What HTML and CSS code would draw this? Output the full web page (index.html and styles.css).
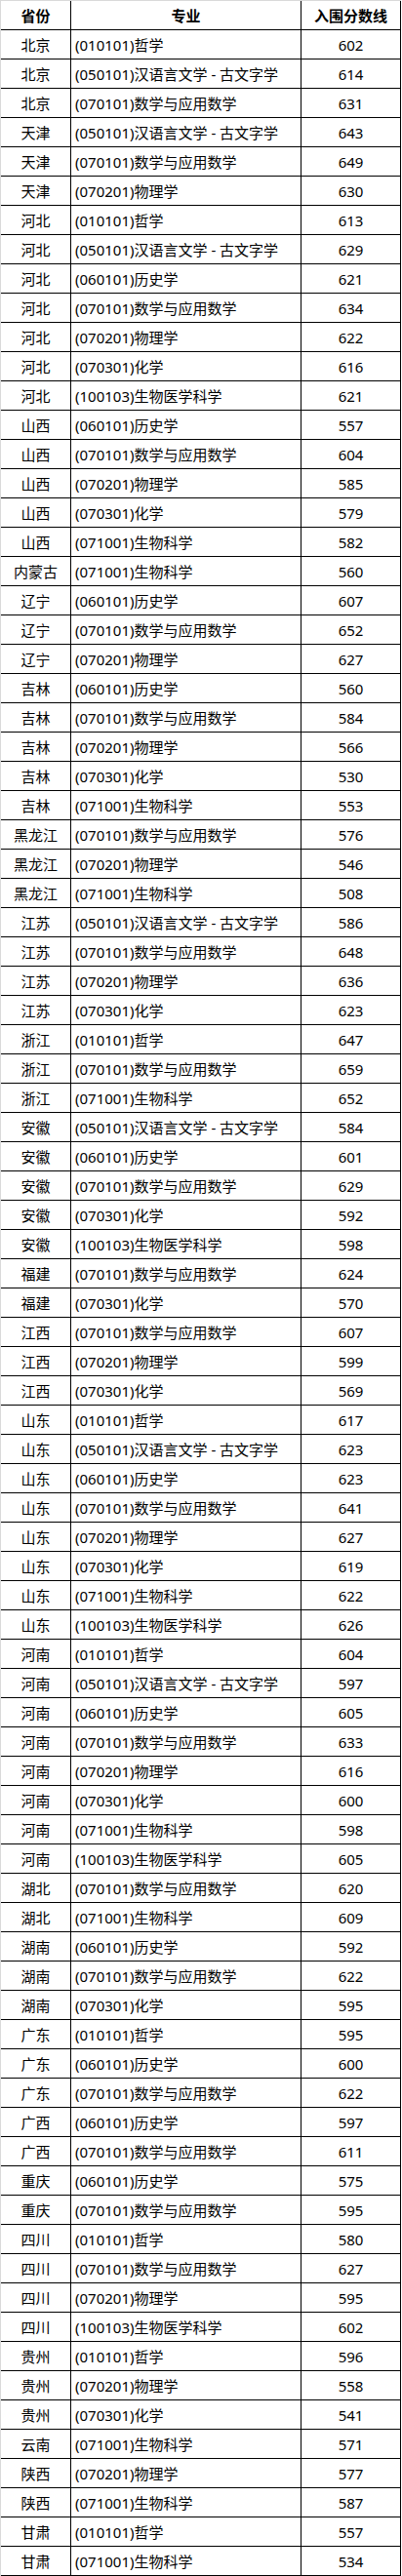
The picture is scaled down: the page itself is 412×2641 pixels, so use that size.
FILE: index.html
```html
<!DOCTYPE html>
<html lang="zh-CN">
<head>
<meta charset="utf-8">
<title>入围分数线</title>
<link rel="stylesheet" href="styles.css">
</head>
<body>
<table class="score-table">
<thead>
<tr><th class="prov">省份</th><th class="major-h">专业</th><th class="num">入围分数线</th></tr>
</thead>
<tbody>
<tr><td class="prov">北京</td><td class="major">(010101)哲学</td><td class="num">602</td></tr>
<tr><td class="prov">北京</td><td class="major">(050101)汉语言文学 - 古文字学</td><td class="num">614</td></tr>
<tr><td class="prov">北京</td><td class="major">(070101)数学与应用数学</td><td class="num">631</td></tr>
<tr><td class="prov">天津</td><td class="major">(050101)汉语言文学 - 古文字学</td><td class="num">643</td></tr>
<tr><td class="prov">天津</td><td class="major">(070101)数学与应用数学</td><td class="num">649</td></tr>
<tr><td class="prov">天津</td><td class="major">(070201)物理学</td><td class="num">630</td></tr>
<tr><td class="prov">河北</td><td class="major">(010101)哲学</td><td class="num">613</td></tr>
<tr><td class="prov">河北</td><td class="major">(050101)汉语言文学 - 古文字学</td><td class="num">629</td></tr>
<tr><td class="prov">河北</td><td class="major">(060101)历史学</td><td class="num">621</td></tr>
<tr><td class="prov">河北</td><td class="major">(070101)数学与应用数学</td><td class="num">634</td></tr>
<tr><td class="prov">河北</td><td class="major">(070201)物理学</td><td class="num">622</td></tr>
<tr><td class="prov">河北</td><td class="major">(070301)化学</td><td class="num">616</td></tr>
<tr><td class="prov">河北</td><td class="major">(100103)生物医学科学</td><td class="num">621</td></tr>
<tr><td class="prov">山西</td><td class="major">(060101)历史学</td><td class="num">557</td></tr>
<tr><td class="prov">山西</td><td class="major">(070101)数学与应用数学</td><td class="num">604</td></tr>
<tr><td class="prov">山西</td><td class="major">(070201)物理学</td><td class="num">585</td></tr>
<tr><td class="prov">山西</td><td class="major">(070301)化学</td><td class="num">579</td></tr>
<tr><td class="prov">山西</td><td class="major">(071001)生物科学</td><td class="num">582</td></tr>
<tr><td class="prov">内蒙古</td><td class="major">(071001)生物科学</td><td class="num">560</td></tr>
<tr><td class="prov">辽宁</td><td class="major">(060101)历史学</td><td class="num">607</td></tr>
<tr><td class="prov">辽宁</td><td class="major">(070101)数学与应用数学</td><td class="num">652</td></tr>
<tr><td class="prov">辽宁</td><td class="major">(070201)物理学</td><td class="num">627</td></tr>
<tr><td class="prov">吉林</td><td class="major">(060101)历史学</td><td class="num">560</td></tr>
<tr><td class="prov">吉林</td><td class="major">(070101)数学与应用数学</td><td class="num">584</td></tr>
<tr><td class="prov">吉林</td><td class="major">(070201)物理学</td><td class="num">566</td></tr>
<tr><td class="prov">吉林</td><td class="major">(070301)化学</td><td class="num">530</td></tr>
<tr><td class="prov">吉林</td><td class="major">(071001)生物科学</td><td class="num">553</td></tr>
<tr><td class="prov">黑龙江</td><td class="major">(070101)数学与应用数学</td><td class="num">576</td></tr>
<tr><td class="prov">黑龙江</td><td class="major">(070201)物理学</td><td class="num">546</td></tr>
<tr><td class="prov">黑龙江</td><td class="major">(071001)生物科学</td><td class="num">508</td></tr>
<tr><td class="prov">江苏</td><td class="major">(050101)汉语言文学 - 古文字学</td><td class="num">586</td></tr>
<tr><td class="prov">江苏</td><td class="major">(070101)数学与应用数学</td><td class="num">648</td></tr>
<tr><td class="prov">江苏</td><td class="major">(070201)物理学</td><td class="num">636</td></tr>
<tr><td class="prov">江苏</td><td class="major">(070301)化学</td><td class="num">623</td></tr>
<tr><td class="prov">浙江</td><td class="major">(010101)哲学</td><td class="num">647</td></tr>
<tr><td class="prov">浙江</td><td class="major">(070101)数学与应用数学</td><td class="num">659</td></tr>
<tr><td class="prov">浙江</td><td class="major">(071001)生物科学</td><td class="num">652</td></tr>
<tr><td class="prov">安徽</td><td class="major">(050101)汉语言文学 - 古文字学</td><td class="num">584</td></tr>
<tr><td class="prov">安徽</td><td class="major">(060101)历史学</td><td class="num">601</td></tr>
<tr><td class="prov">安徽</td><td class="major">(070101)数学与应用数学</td><td class="num">629</td></tr>
<tr><td class="prov">安徽</td><td class="major">(070301)化学</td><td class="num">592</td></tr>
<tr><td class="prov">安徽</td><td class="major">(100103)生物医学科学</td><td class="num">598</td></tr>
<tr><td class="prov">福建</td><td class="major">(070101)数学与应用数学</td><td class="num">624</td></tr>
<tr><td class="prov">福建</td><td class="major">(070301)化学</td><td class="num">570</td></tr>
<tr><td class="prov">江西</td><td class="major">(070101)数学与应用数学</td><td class="num">607</td></tr>
<tr><td class="prov">江西</td><td class="major">(070201)物理学</td><td class="num">599</td></tr>
<tr><td class="prov">江西</td><td class="major">(070301)化学</td><td class="num">569</td></tr>
<tr><td class="prov">山东</td><td class="major">(010101)哲学</td><td class="num">617</td></tr>
<tr><td class="prov">山东</td><td class="major">(050101)汉语言文学 - 古文字学</td><td class="num">623</td></tr>
<tr><td class="prov">山东</td><td class="major">(060101)历史学</td><td class="num">623</td></tr>
<tr><td class="prov">山东</td><td class="major">(070101)数学与应用数学</td><td class="num">641</td></tr>
<tr><td class="prov">山东</td><td class="major">(070201)物理学</td><td class="num">627</td></tr>
<tr><td class="prov">山东</td><td class="major">(070301)化学</td><td class="num">619</td></tr>
<tr><td class="prov">山东</td><td class="major">(071001)生物科学</td><td class="num">622</td></tr>
<tr><td class="prov">山东</td><td class="major">(100103)生物医学科学</td><td class="num">626</td></tr>
<tr><td class="prov">河南</td><td class="major">(010101)哲学</td><td class="num">604</td></tr>
<tr><td class="prov">河南</td><td class="major">(050101)汉语言文学 - 古文字学</td><td class="num">597</td></tr>
<tr><td class="prov">河南</td><td class="major">(060101)历史学</td><td class="num">605</td></tr>
<tr><td class="prov">河南</td><td class="major">(070101)数学与应用数学</td><td class="num">633</td></tr>
<tr><td class="prov">河南</td><td class="major">(070201)物理学</td><td class="num">616</td></tr>
<tr><td class="prov">河南</td><td class="major">(070301)化学</td><td class="num">600</td></tr>
<tr><td class="prov">河南</td><td class="major">(071001)生物科学</td><td class="num">598</td></tr>
<tr><td class="prov">河南</td><td class="major">(100103)生物医学科学</td><td class="num">605</td></tr>
<tr><td class="prov">湖北</td><td class="major">(070101)数学与应用数学</td><td class="num">620</td></tr>
<tr><td class="prov">湖北</td><td class="major">(071001)生物科学</td><td class="num">609</td></tr>
<tr><td class="prov">湖南</td><td class="major">(060101)历史学</td><td class="num">592</td></tr>
<tr><td class="prov">湖南</td><td class="major">(070101)数学与应用数学</td><td class="num">622</td></tr>
<tr><td class="prov">湖南</td><td class="major">(070301)化学</td><td class="num">595</td></tr>
<tr><td class="prov">广东</td><td class="major">(010101)哲学</td><td class="num">595</td></tr>
<tr><td class="prov">广东</td><td class="major">(060101)历史学</td><td class="num">600</td></tr>
<tr><td class="prov">广东</td><td class="major">(070101)数学与应用数学</td><td class="num">622</td></tr>
<tr><td class="prov">广西</td><td class="major">(060101)历史学</td><td class="num">597</td></tr>
<tr><td class="prov">广西</td><td class="major">(070101)数学与应用数学</td><td class="num">611</td></tr>
<tr><td class="prov">重庆</td><td class="major">(060101)历史学</td><td class="num">575</td></tr>
<tr><td class="prov">重庆</td><td class="major">(070101)数学与应用数学</td><td class="num">595</td></tr>
<tr><td class="prov">四川</td><td class="major">(010101)哲学</td><td class="num">580</td></tr>
<tr><td class="prov">四川</td><td class="major">(070101)数学与应用数学</td><td class="num">627</td></tr>
<tr><td class="prov">四川</td><td class="major">(070201)物理学</td><td class="num">595</td></tr>
<tr><td class="prov">四川</td><td class="major">(100103)生物医学科学</td><td class="num">602</td></tr>
<tr><td class="prov">贵州</td><td class="major">(010101)哲学</td><td class="num">596</td></tr>
<tr><td class="prov">贵州</td><td class="major">(070201)物理学</td><td class="num">558</td></tr>
<tr><td class="prov">贵州</td><td class="major">(070301)化学</td><td class="num">541</td></tr>
<tr><td class="prov">云南</td><td class="major">(071001)生物科学</td><td class="num">571</td></tr>
<tr><td class="prov">陕西</td><td class="major">(070201)物理学</td><td class="num">577</td></tr>
<tr><td class="prov">陕西</td><td class="major">(071001)生物科学</td><td class="num">587</td></tr>
<tr><td class="prov">甘肃</td><td class="major">(010101)哲学</td><td class="num">557</td></tr>
<tr><td class="prov">甘肃</td><td class="major">(071001)生物科学</td><td class="num">534</td></tr>
</tbody>
</table>
</body>
</html>
```

FILE: styles.css
```css
html, body {
  margin: 0;
  padding: 0;
  background: #ffffff;
}

body {
  font-family: "Noto Sans", "Noto Sans CJK SC", sans-serif;
  font-size: 15px;
  color: #000000;
}

.score-table {
  border-collapse: separate;
  border-spacing: 0;
  table-layout: fixed;
  width: 411px;
  border-top: 1px solid #d9d9d9;
  border-left: 1px solid #d9d9d9;
}

.score-table th,
.score-table td {
  padding: 2px 0 0 0;
  line-height: 27px;
  border-right: 1px solid #000000;
  border-bottom: 1px solid #000000;
  white-space: nowrap;
  overflow: hidden;
  font-weight: normal;
}

.score-table th {
  font-weight: bold;
  padding-top: 1px;
  line-height: 28px;
}

.prov {
  width: 71px;
  text-align: center;
}

.major-h {
  width: 235px;
  text-align: center;
}

.major {
  text-align: left;
  padding-left: 4px !important;
}

.num {
  width: 101px;
  text-align: center;
}
```
